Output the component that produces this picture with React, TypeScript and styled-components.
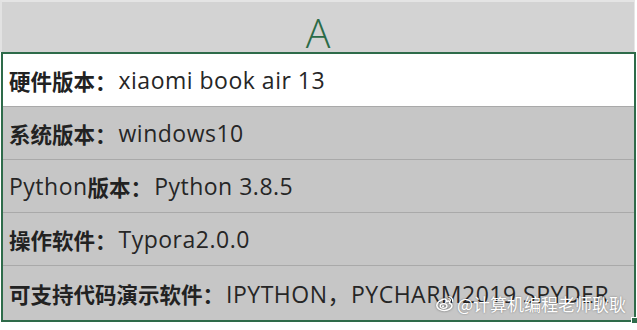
import styled, { createGlobalStyle } from "styled-components";

const GlobalStyle = createGlobalStyle`
  html, body {
    margin: 0;
    padding: 0;
    background: #ffffff;
  }
  body {
    font-family: "Open Sans", "Noto Sans CJK SC", sans-serif;
  }
`;

type RowData = { label: string; value: string; lightLabel?: string };

const rows: RowData[] = [
  { label: "硬件版本：", value: "xiaomi book air 13" },
  { label: "系统版本：", value: "windows10" },
  { lightLabel: "Python", label: "版本：", value: "Python 3.8.5" },
  { label: "操作软件：", value: "Typora2.0.0" },
  { label: "可支持代码演示软件：", value: "IPYTHON，PYCHARM2019 SPYDER" },
];

export default function App() {
  return (
    <>
      <GlobalStyle />
      <Sheet>
        <ColumnHeader>
          <ColumnName>A</ColumnName>
        </ColumnHeader>
        <Selection>
          {rows.map((row, i) => (
            <Row key={i} $first={i === 0} $last={i === rows.length - 1}>
              {row.lightLabel && <Value>{row.lightLabel}</Value>}
              <Label>{row.label}</Label>
              <Value>{row.value}</Value>
            </Row>
          ))}
          <FillHandle />
          <Watermark>
            <WeiboLogo />
            <span>@计算机编程老师耿耿</span>
          </Watermark>
        </Selection>
      </Sheet>
    </>
  );
}

function WeiboLogo() {
  return (
    <svg width="20" height="17" viewBox="0 0 20 17">
      <path
        d="M8.2 4.2c-3.3 1.2-6.4 3.8-6.4 6.4 0 2.9 3.6 4.8 7.6 4.8 4.6 0 7.6-2.6 7.6-4.7 0-1.6-1.5-2.1-2.4-2.4.6-1.2.4-2.6-1.6-2.2-1 .2-1.8.6-1.8.6.4-1.4.2-3.2-3-2.5z"
        fill="none"
        stroke="#ffffff"
        strokeWidth="1.5"
      />
      <ellipse cx="8.6" cy="11" rx="3.4" ry="2.4" fill="none" stroke="#ffffff" strokeWidth="1.3" />
      <circle cx="8" cy="11.3" r="1" fill="#ffffff" />
      <path d="M14 1.6c2.4.2 4 2.2 3.6 4.6" fill="none" stroke="#ffffff" strokeWidth="1.4" strokeLinecap="round" />
      <path d="M13.8 3.6c1.1.1 1.8 1 1.6 2" fill="none" stroke="#ffffff" strokeWidth="1.2" strokeLinecap="round" />
    </svg>
  );
}

const Sheet = styled.div`
  width: 637px;
  height: 330px;
  overflow: hidden;
  background: #ffffff;
`;

const ColumnHeader = styled.div`
  box-sizing: border-box;
  height: 52px;
  margin-right: 2px;
  background: #d3d3d3;
  border-top: 2px solid #e4e4e4;
  border-left: 2px solid #e2e2e2;
  border-right: 1px solid #e6e6e6;
  display: flex;
  align-items: center;
  justify-content: center;
`;

const ColumnName = styled.div`
  font-family: "Open Sans", sans-serif;
  font-weight: 300;
  font-size: 41px;
  line-height: 1;
  color: #2b6b47;
  margin-top: 10px;
`;

const Selection = styled.div`
  position: relative;
  box-sizing: border-box;
  width: 635px;
  margin-left: 1px;
  border: 2px solid #2e6b4a;
`;

const Row = styled.div<{ $first: boolean; $last: boolean }>`
  box-sizing: border-box;
  height: ${(p) => (p.$last ? 54 : 53)}px;
  padding-left: 6px;
  display: flex;
  align-items: center;
  white-space: nowrap;
  overflow: hidden;
  background: ${(p) => (p.$first ? "#ffffff" : "#c6c6c6")};
  border-bottom: ${(p) => (p.$last ? "none" : "1px solid #a9a9a9")};
  color: #262626;
  font-size: 22px;
`;

const Label = styled.span`
  font-family: "Noto Sans CJK SC", sans-serif;
  font-weight: 700;
  font-size: 21.5px;
  color: #222222;
  margin-right: 2px;
`;

const Value = styled.span`
  font-family: "Open Sans", "Noto Sans CJK SC", sans-serif;
  font-weight: 400;
  font-size: 23px;
  letter-spacing: 0.5px;
`;

const FillHandle = styled.div`
  position: absolute;
  right: -4px;
  bottom: -4px;
  width: 5px;
  height: 5px;
  background: #2e6b4a;
  border: 1px solid #ffffff;
`;

const Watermark = styled.div`
  position: absolute;
  right: 8px;
  bottom: 4px;
  display: flex;
  align-items: center;
  gap: 2px;
  font-family: "Noto Sans CJK SC", sans-serif;
  font-size: 17px;
  color: #ffffff;
  text-shadow: 0 0 2px rgba(0, 0, 0, 0.45);

  svg {
    filter: drop-shadow(0 0 1px rgba(0, 0, 0, 0.5));
  }
`;
